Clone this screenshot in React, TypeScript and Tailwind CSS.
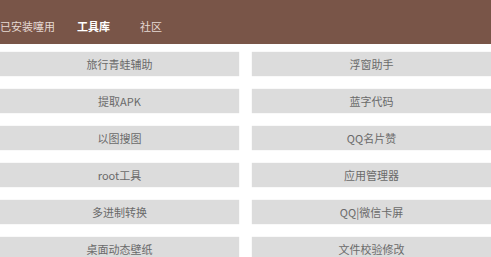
const TABS = [
  { label: "已安装噻用", active: false, cls: "ml-0" },
  { label: "工具库", active: true, cls: "ml-[22px]" },
  { label: "社区", active: false, cls: "ml-[30px]" },
];

const TOOLS = [
  "旅行青蛙辅助", "浮窗助手",
  "提取APK", "蓝字代码",
  "以图搜图", "QQ名片赞",
  "root工具", "应用管理器",
  "多进制转换", "QQ|微信卡屏",
  "桌面动态壁纸", "文件校验修改",
];

export default function App() {
  return (
    <div className="w-[491px] h-[257px] overflow-hidden bg-white" style={{ fontFamily: '"Noto Sans CJK SC", "Noto Sans", sans-serif' }}>
      <div className="h-[44px] bg-[#795548] flex items-center pt-[8px]">
        {TABS.map(t => (
          <span key={t.label} className={`${t.cls} text-[11px] leading-none ${t.active ? "text-white font-bold" : "text-[#e6d9d3]"}`}>{t.label}</span>
        ))}
      </div>
      <div className="grid grid-cols-[239px_239px] gap-x-[13px] gap-y-[13px] pt-[8px]">
        {TOOLS.map(name => (
          <div key={name} className="h-[24px] bg-[#dcdcdc] shadow-[0_0_1px_rgba(0,0,0,0.15)] flex items-center justify-center text-[11px] text-[#6a6a6a]">
            {name}
          </div>
        ))}
      </div>
    </div>
  );
}
